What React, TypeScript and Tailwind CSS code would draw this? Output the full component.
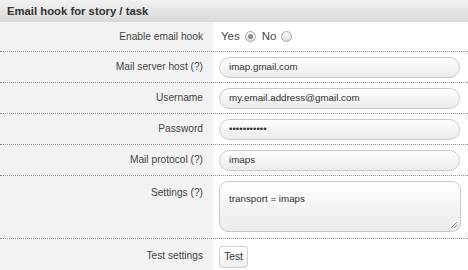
const font = { fontFamily: '"Liberation Sans", Arial, sans-serif' };

function Radio({ checked }: { checked?: boolean }) {
  return (
    <span className="inline-flex h-[11px] w-[11px] items-center justify-center rounded-full border border-[#a9a9a9] bg-gradient-to-b from-[#fdfdfd] to-[#dcdcdc]">
      {checked && <span className="h-[5px] w-[5px] rounded-full bg-[#8a8a8a]" />}
    </span>
  );
}

function Pill({ value }: { value: string }) {
  return (
    <div className="flex h-[21px] w-[241px] items-center rounded-full border border-[#c9c9c9] bg-gradient-to-b from-white to-[#ebebeb] pl-[9px] text-[9.8px] text-[#333]">
      {value}
    </div>
  );
}

function Row({
  label,
  children,
  top,
  last,
}: {
  label: string;
  children: React.ReactNode;
  top?: boolean;
  last?: boolean;
}) {
  return (
    <div
      className={
        "grid grid-cols-[213px_1fr] " +
        (last ? "" : "border-b border-dotted border-[#8c8c8c]")
      }
    >
      <div
        className={
          "flex justify-end bg-[#f2f2f2] pr-[10px] text-[10.2px] text-[#444] " +
          (top ? "items-start pt-[9px]" : "items-center")
        }
      >
        {label}
      </div>
      <div className="flex items-center pl-[6px] pt-[5px] pb-[4px]">{children}</div>
    </div>
  );
}

export default function App() {
  return (
    <div className="h-[270px] w-[468px] overflow-hidden bg-white" style={font}>
      <div className="flex h-[22px] items-center bg-gradient-to-b from-[#f2f2f2] to-[#d9d9d9] pl-[7px] text-[11.3px] font-bold text-[#333]">
        Email hook for story / task
      </div>
      <div className="grid grid-cols-[213px_1fr] border-b border-dotted border-[#8c8c8c]">
        <div className="flex h-[29px] items-center justify-end bg-[#f2f2f2] pr-[10px] text-[10.2px] text-[#444]">
          Enable email hook
        </div>
        <div className="flex items-center gap-[5px] pl-[8px] text-[11.5px] text-[#444]">
          <span>Yes</span>
          <Radio checked />
          <span className="ml-[1px]">No</span>
          <Radio />
        </div>
      </div>
      <Row label="Mail server host (?)">
        <Pill value="imap.gmail.com" />
      </Row>
      <Row label="Username">
        <Pill value="my.email.address@gmail.com" />
      </Row>
      <Row label="Password">
        <Pill value="•••••••••••" />
      </Row>
      <Row label="Mail protocol (?)">
        <Pill value="imaps" />
      </Row>
      <Row label="Settings (?)" top>
        <div className="relative mb-[2px] h-[51px] w-[242px] rounded-[9px] border border-[#c9c9c9] bg-gradient-to-b from-white to-[#ebebeb] pl-[9px] pt-[10px] text-[9.8px] text-[#333]">
          transport = imaps
          <svg className="absolute bottom-[2px] right-[2px]" width="8" height="8" viewBox="0 0 8 8">
            <path d="M7 1L1 7M7 4L4 7" stroke="#8a8a8a" strokeWidth="1" />
          </svg>
        </div>
      </Row>
      <Row label="Test settings" last>
        <div className="mt-[2px] flex h-[22px] w-[29px] items-center justify-center rounded-[3px] border border-[#d0d0d0] bg-gradient-to-b from-white to-[#eeeeee] text-[10.2px] text-[#333]">
          Test
        </div>
      </Row>
    </div>
  );
}
